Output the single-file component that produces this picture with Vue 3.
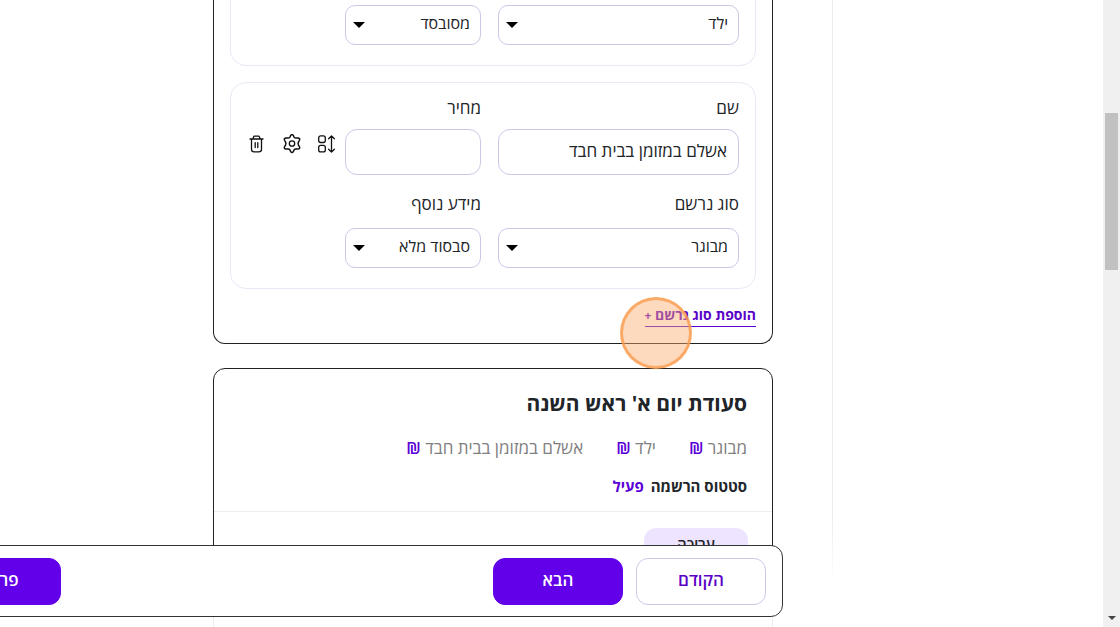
<script setup>
import { ref } from 'vue'

const previous = ref({ type: 'ילד', extra: 'מסובסד' })
const registrant = ref({ name: 'אשלם במזומן בבית חבד', price: '', type: 'מבוגר', extra: 'סבסוד מלא' })
const types = ['מבוגר', 'ילד']
const extras = ['מסובסד', 'סבסוד מלא']
const prices = ['מבוגר', 'ילד', 'אשלם במזומן בבית חבד']
</script>

<template>
  <div class="window">
    <div class="page" dir="rtl">
      <aside class="side"></aside>
      <main class="content">
        <section class="card types">
          <div class="panel panel-cut">
            <div class="fields">
              <div class="picker">
                <select v-model="previous.type" aria-label="סוג נרשם">
                  <option v-for="t in types" :key="t">{{ t }}</option>
                </select>
              </div>
              <div class="picker">
                <select v-model="previous.extra" aria-label="מידע נוסף">
                  <option v-for="e in extras" :key="e">{{ e }}</option>
                </select>
              </div>
            </div>
          </div>

          <div class="panel">
            <div class="fields">
              <div class="field">
                <label for="name">שם</label>
                <input id="name" v-model="registrant.name" type="text" />
              </div>
              <div class="field">
                <label for="price">מחיר</label>
                <input id="price" v-model="registrant.price" type="text" />
              </div>
              <div class="tools">
                <button type="button" aria-label="שינוי סדר">
                  <svg width="20" height="20" viewBox="0 0 20 20">
                    <rect x="1.7" y="1.9" width="6.6" height="6.6" rx="2" />
                    <rect x="1.7" y="11.3" width="6.6" height="6.6" rx="2" />
                    <path d="M14.5 2v16M11.6 4.8l2.9-2.9 2.9 2.9M11.6 15.2l2.9 2.9 2.9-2.9" />
                  </svg>
                </button>
                <button type="button" aria-label="הגדרות">
                  <svg width="20" height="20" viewBox="0 0 20 20">
                    <circle cx="10" cy="9.500" r="2.700" />
                    <path class="bold" transform="translate(0 -.5)" d="M8.6 2.2Q10 -.2 11.4 2.2L12.1 3.6Q12.8 4.6 14 4.5L15.8 4.4Q18.500 4.600 17.300 7L16.400 8.700Q15.800 10 16.400 11.300L17.300 13Q18.500 15.400 15.800 15.600L14 15.500Q12.800 15.400 12.100 16.400L11.400 17.800Q10 20.200 8.600 17.800L7.900 16.400Q7.200 15.400 6 15.500L4.200 15.600Q1.500 15.400 2.700 13L3.600 11.300Q4.200 10 3.600 8.700L2.700 7Q1.500 4.600 4.200 4.400L6 4.500Q7.200 4.600 7.900 3.600Z" />
                  </svg>
                </button>
                <button type="button" aria-label="מחיקה">
                  <svg width="20" height="20" viewBox="0 0 20 20">
                    <path d="M3 5h13M6 4.800 6.500 3Q6.700 2.200 7.500 2.200h4Q12.300 2.200 12.500 3l.5 1.800M4.500 5v10.200q0 2.600 2.600 2.600h4.800q2.600 0 2.600-2.600V5M8.200 8.600v5M10.800 8.600v5" />
                  </svg>
                </button>
              </div>
            </div>
            <div class="fields second">
              <div class="field">
                <label for="type">סוג נרשם</label>
                <div class="picker">
                  <select id="type" v-model="registrant.type">
                    <option v-for="t in types" :key="t">{{ t }}</option>
                  </select>
                </div>
              </div>
              <div class="field">
                <label for="extra">מידע נוסף</label>
                <div class="picker">
                  <select id="extra" v-model="registrant.extra">
                    <option v-for="e in extras" :key="e">{{ e }}</option>
                  </select>
                </div>
              </div>
            </div>
          </div>

          <div class="add">
            <a href="#">הוספת סוג נרשם <span class="plus">+</span></a>
            <span class="click-mark"></span>
          </div>
        </section>

        <section class="card event">
          <header>
            <h2>סעודת יום א' ראש השנה</h2>
            <ul>
              <li v-for="p in prices" :key="p">{{ p }} <b>₪</b></li>
            </ul>
            <p class="status">סטטוס הרשמה <a href="#">פעיל</a></p>
          </header>
          <div class="actions">
            <button type="button">עריכה</button>
          </div>
        </section>
        <section class="next"></section>
      </main>

      <footer class="steps">
        <button type="button" class="back">הקודם</button>
        <button type="button" class="forward">הבא</button>
        <button type="button" class="forward publish">פרסום</button>
      </footer>
    </div>
    <div class="scrollbar">
      <span class="thumb"></span>
      <span class="down"></span>
    </div>
  </div>
</template>

<style>
body {
  margin: 0;
  background: #fff;
}
</style>

<style scoped>
.window {
  display: grid;
  grid-template-columns: minmax(0, 1fr) 17px;
  height: 100vh;
  overflow: hidden;
  font-family: "Open Sans", "Liberation Sans", sans-serif;
  font-size: 17px;
  color: #212529;
}
.window * {
  box-sizing: border-box;
}
button, input, select {
  font: inherit;
  color: inherit;
}
.page {
  position: relative;
  display: flex;
  min-width: 0;
  min-height: 0;
  overflow: hidden;
}
.side {
  flex: 0 0 271px;
  height: 584px;
  border-left: 1px solid;
  border-image: linear-gradient(#ebebf0 88%, #fff) 1;
}
.content {
  flex: 1;
  padding-right: 59px;
  padding-left: 213px;
}
.card {
  border: 1px solid #222;
  border-radius: 12px;
}
.types {
  display: flex;
  flex-direction: column;
  gap: 16px;
  padding: 0 16px 16px;
  border-top: 0;
  border-radius: 0 0 12px 12px;
}
.panel {
  padding: 13px 16px 20px;
  border: 1px solid #ebe8f5;
  border-radius: 16px;
}
.panel-cut {
  padding-top: 5px;
  border-top: 0;
  border-radius: 0 0 16px 16px;
}
.fields {
  display: grid;
  grid-template-columns: minmax(0, 241fr) minmax(0, 136fr) minmax(0, 81fr);
  column-gap: 17px;
}
.second {
  margin-top: 17px;
}
.field {
  display: flex;
  flex-direction: column;
}
label {
  height: 24px;
  line-height: 24px;
  margin-bottom: 9px;
}
.second label {
  margin-bottom: 12px;
}
input {
  width: 100%;
  height: 46px;
  padding: 0 11px 4px;
  border: 1px solid #cfc6e6;
  border-radius: 12px;
  background: #fff;
  outline: 0;
}
.picker {
  position: relative;
}
.picker::after {
  content: "";
  position: absolute;
  left: 8px;
  top: 17px;
  border: 6px solid transparent;
  border-top-color: #000;
  border-bottom: 0;
  pointer-events: none;
}
select {
  display: block;
  width: 100%;
  height: 40px;
  padding: 0 10px 5px;
  border: 1px solid #cfc6e6;
  border-radius: 10px;
  background: #fff;
  appearance: none;
  font-size: 16px;
}
.tools {
  display: flex;
  justify-content: space-between;
  padding-top: 38px;
  margin-right: -9px;
}
.tools button {
  width: 20px;
  height: 20px;
  padding: 0;
  border: 0;
  background: none;
}
.tools svg {
  display: block;
  fill: none;
  stroke: #111;
  stroke-width: 1.3;
  stroke-linecap: round;
  stroke-linejoin: round;
}
.tools .bold {
  stroke-width: 1.5;
}
.add {
  position: relative;
  line-height: 20px;
}
.add a {
  display: inline-block;
  border-bottom: 1px solid #5a00d6;
  color: #5a00c8;
  font-size: 14px;
  font-weight: 700;
  text-decoration: none;
  vertical-align: top;
}
.plus {
  font-size: 12px;
}
.click-mark {
  position: absolute;
  top: -8px;
  right: 64px;
  width: 72px;
  height: 72px;
  border: 3px solid rgba(251, 153, 74, 0.75);
  border-radius: 50%;
  background: rgba(250, 170, 110, 0.45);
  z-index: 1;
}
.event {
  margin-top: 24px;
}
.event header {
  padding: 17px 25px 13px;
  border-bottom: 1px solid #ededf2;
}
h2 {
  margin: 0;
  font-size: 21px;
  line-height: 34px;
  font-weight: 700;
}
ul {
  display: flex;
  gap: 33px;
  margin: 15px 0 0;
  padding: 0;
  list-style: none;
  color: #808080;
  line-height: 26px;
}
li b {
  color: #5a00d6;
  font-weight: 600;
}
.status {
  margin: 13px 0 0;
  font-size: 15px;
  font-weight: 700;
  line-height: 24px;
}
.status a {
  margin-right: 3px;
  color: #5a00d6;
  text-decoration: none;
}
.actions {
  padding: 16px 24px 20px;
}
.actions button {
  width: 104px;
  height: 32px;
  padding: 0;
  border: 0;
  border-radius: 12px;
  background: #eee4ff;
  font-size: 15px;
  font-weight: 600;
}
.next {
  height: 60px;
  border: 1px solid #ebebf0;
  border-top: 0;
}
.steps {
  position: absolute;
  bottom: 10px;
  right: 320px;
  left: -140px;
  display: flex;
  gap: 13px;
  padding: 12px 16px 11px;
  border: 1px solid #333;
  border-radius: 12px;
  background: #fff;
  z-index: 2;
}
.steps button {
  width: 130px;
  height: 47px;
  padding: 0 0 4px;
  border: 1px solid #cfc6e6;
  border-radius: 12px;
  background: #fff;
  color: #5a00c8;
  font-weight: 600;
}
.steps .forward {
  border-color: #6200ea;
  background: #6200ea;
  color: #fff;
}
.steps .publish {
  margin-right: auto;
  margin-left: 54px;
}
.scrollbar {
  position: relative;
  background: #f0f0f0;
}
.thumb {
  position: absolute;
  top: 18%;
  left: 2px;
  right: 2px;
  height: 25%;
  background: #c1c1c1;
}
.down {
  position: absolute;
  bottom: 7px;
  left: 5px;
  border: 4px solid transparent;
  border-top-color: #444;
  border-bottom: 0;
}
</style>
